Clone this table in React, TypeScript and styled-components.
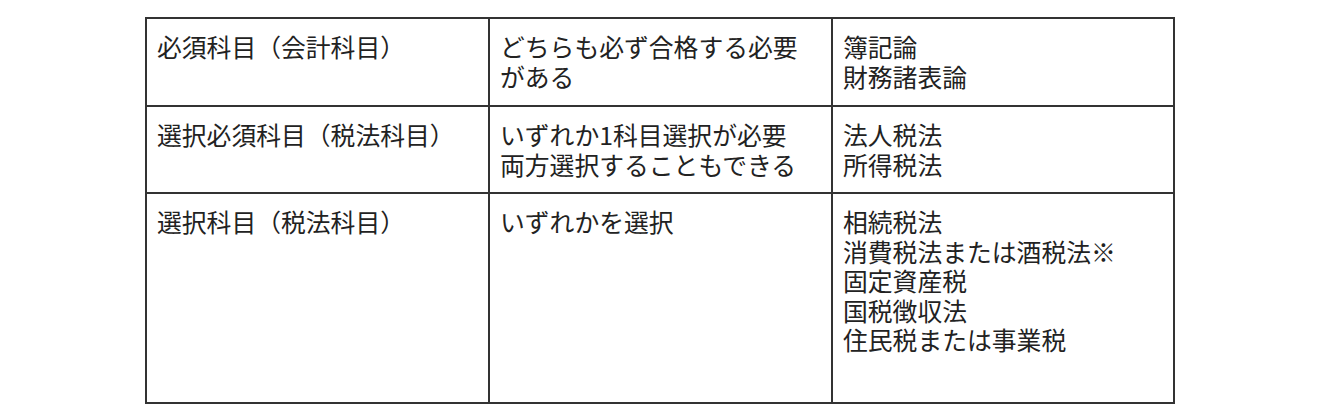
import React from "react";
import styled, { createGlobalStyle } from "styled-components";

const GlobalStyle = createGlobalStyle`
  html, body {
    margin: 0;
    padding: 0;
    background: #ffffff;
  }
`;

const Page = styled.div`
  width: 1320px;
  height: 414px;
  padding-top: 17px;
  box-sizing: border-box;
  display: flex;
  justify-content: center;
  align-items: flex-start;
  background: #fff;
`;

const Table = styled.div`
  display: grid;
  grid-template-columns: 341px 341px 340px;
  grid-template-rows: 86px 85px 208px;
  gap: 2px;
  padding: 2px;
  background: #333;
  font-family: "Noto Sans CJK JP", "Noto Sans", sans-serif;
  font-size: 24.8px;
  line-height: 29.5px;
  color: #222;
`;

const Cell = styled.div`
  background: #fff;
  padding: 13px 10px 0;
  white-space: pre-line;
`;

const rows: string[][] = [
  ["必須科目（会計科目）", "どちらも必ず合格する必要\nがある", "簿記論\n財務諸表論"],
  ["選択必須科目（税法科目）", "いずれか1科目選択が必要\n両方選択することもできる", "法人税法\n所得税法"],
  [
    "選択科目（税法科目）",
    "いずれかを選択",
    "相続税法\n消費税法または酒税法※\n固定資産税\n国税徴収法\n住民税または事業税",
  ],
];

export default function App() {
  return (
    <>
      <GlobalStyle />
      <Page>
        <Table>
          {rows.map((row, i) =>
            row.map((text, j) => <Cell key={`${i}-${j}`}>{text}</Cell>)
          )}
        </Table>
      </Page>
    </>
  );
}
